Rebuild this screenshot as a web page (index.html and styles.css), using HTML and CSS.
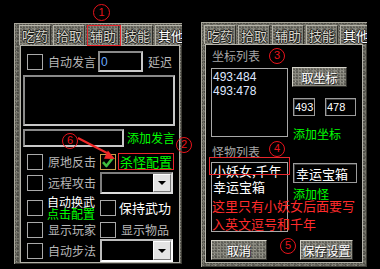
FILE: index.html
```html
<!DOCTYPE html>
<html lang="zh-CN">
<head>
<meta charset="utf-8">
<title>辅助设置</title>
<link rel="stylesheet" href="styles.css">
</head>
<body>
<div class="screen">
  <section class="panel panel-left">
    <div class="tabs">
      <span class="tab">吃药</span><span class="tab">拾取</span><span class="tab">辅助</span><span class="tab">技能</span><span class="tab active">其他</span>
    </div>
    <div class="content content-left">
      <div class="row r1">
        <span class="cb"></span><span class="lbl">自动发言</span><span class="field f-delay">0</span><span class="lbl l-after">延迟</span>
      </div>
      <div class="field memo"></div>
      <div class="row r-say">
        <span class="field f-say"></span><span class="link">添加发言</span>
      </div>
      <div class="row r2">
        <span class="cb"></span><span class="lbl">原地反击</span><span class="cb checked"><svg width="14" height="14" viewBox="0 0 14 14"><path d="M2 7.2 L5.4 11 L12.2 2.4" fill="none" stroke="#3fbf3f" stroke-width="2.6" stroke-linejoin="round"/></svg></span><span class="link link-kill">杀怪配置</span>
      </div>
      <div class="row r3">
        <span class="cb"></span><span class="lbl">远程攻击</span><span class="select"><span class="arrow"></span></span>
      </div>
      <div class="row r4">
        <span class="cb"></span><span class="stack"><span class="white">自动换武</span><span class="link">点击配置</span></span><span class="cb"></span><span class="lbl white big">保持武功</span>
      </div>
      <div class="row r5">
        <span class="cb"></span><span class="lbl">显示玩家</span><span class="cb cb-2"></span><span class="lbl">显示物品</span>
      </div>
      <div class="row r6">
        <span class="cb"></span><span class="lbl">自动步法</span><span class="select select-light"><span class="arrow"></span></span>
      </div>
    </div>
  </section>

  <section class="panel panel-right">
    <div class="tabs">
      <span class="tab">吃药</span><span class="tab">拾取</span><span class="tab">辅助</span><span class="tab">技能</span><span class="tab active">其他</span>
    </div>
    <div class="content content-right">
      <div class="heading">坐标列表</div>
      <div class="pair pair-1">
        <div class="list list-coords"><div class="item num">493:484</div><div class="item num">493:478</div></div>
        <div class="side side-1">
          <span class="btn btn-get">取坐标</span>
          <div class="coords"><span class="field fr f-x">493</span><span class="field fr f-y">478</span></div>
          <span class="link side-link">添加坐标</span>
        </div>
      </div>
      <div class="heading h2">怪物列表</div>
      <div class="pair pair-2">
        <div class="list list-mobs"><div class="item">小妖女,千年</div><div class="item">幸运宝箱</div></div>
        <div class="side side-2">
          <span class="field fr f-mob">幸运宝箱</span>
          <span class="link side-link2">添加怪</span>
        </div>
      </div>
      <div class="actions"><span class="btn btn-cancel">取消</span><span class="btn btn-save">保存设置</span></div>
    </div>
  </section>
</div>

<div class="redbox rb-tab"></div>
<div class="redbox rb-kill"></div>
<div class="redbox rb-mob"></div>

<span class="mark m1">1</span>
<span class="mark m2">2</span>
<span class="mark m3">3</span>
<span class="mark m4">4</span>
<span class="mark m5">5</span>
<span class="mark m6">6</span>

<svg class="arrow-note" width="60" height="35" viewBox="0 0 60 35">
  <line x1="18" y1="8" x2="47" y2="23" stroke="#f02828" stroke-width="2"/>
  <polygon points="55,29 44,28.8 47.9,20.6" fill="#f02828"/>
</svg>

<div class="note"><span>这里只有小妖女后面要写</span><span>入英文逗号和千年</span></div>
</body>
</html>
```

FILE: styles.css
```css
body {
  margin: 0;
  width: 380px;
  height: 269px;
  overflow: hidden;
  position: relative;
  background: #000;
  font-family: "Noto Sans CJK SC", "Liberation Sans", sans-serif;
}

.screen {
  display: flex;
  align-items: flex-start;
  gap: 19px;
  padding: 22px 0 0 14px;
}

/* stone texture */
.panel,
.tab,
.btn {
  background-color: #76756b;
  background-image:
    radial-gradient(circle at 30% 40%, rgba(0,0,0,.32) 0 0.7px, transparent 1.1px),
    radial-gradient(circle at 70% 70%, rgba(255,255,255,.20) 0 0.6px, transparent 1px),
    radial-gradient(circle at 50% 50%, rgba(0,0,0,.22) 0 1px, transparent 1.6px);
  background-size: 3px 3px, 4px 5px, 7px 6px;
}

.panel {
  box-sizing: border-box;
  display: flex;
  flex-direction: column;
  overflow: hidden;
  box-shadow: inset 1px 1px 0 #a9a79c, inset -1px -1px 0 #3c3b35;
}

.panel-left {
  width: 168px;
  height: 241px;
  margin-top: 1px;
  padding: 2px 2px 1px 6px;
}

.panel-right {
  width: 166px;
  height: 245px;
  padding: 3px 4px 4px 4px;
}

.tabs {
  display: flex;
  flex: none;
  height: 20px;
  margin-left: -1px;
  overflow: visible;
}
.panel-right .tabs { height: 19px; }

.tab {
  flex: none;
  box-sizing: border-box;
  height: 100%;
  padding: 0 2px;
  margin-right: 2px;
  border: 1px solid;
  border-color: #b6b4a9 #2f2e29 transparent #b6b4a9;
  border-bottom: 0;
  background-color: #85847a;
  font-size: 13px;
  line-height: 20px;
  color: #d6d5cc;
  white-space: nowrap;
  text-shadow: 1px 0 0 #1d1d1a, -1px 0 0 #1d1d1a, 0 1px 0 #1d1d1a, 0 -1px 0 #1d1d1a;
}
.tab.active { color: #fff; }

.content {
  flex: 1;
  min-height: 0;
  background: #000;
  border: 1px solid #b5b4ab;
  overflow: hidden;
}

.content-left { padding: 5px 2px 0 2px; }
.content-right { padding: 4px 5px 0 5px; }

/* left side */
.row {
  display: flex;
  align-items: center;
  padding-left: 4px;
}
.r1 { height: 21px; }
.r-say { height: 18px; margin-top: 3px; padding-left: 0; }
.r2 { height: 17px; margin-top: 6px; }
.r3 { height: 22px; margin-top: 2px; }
.r4 { height: 24px; margin-top: 2px; }
.r5 { height: 16px; margin-top: 2px; }
.r6 { height: 23px; margin-top: 1px; }

.cb {
  flex: none;
  box-sizing: border-box;
  width: 16px;
  height: 16px;
  border: 1px solid #a9a9a9;
  background: #000;
}
.cb.checked {
  margin-left: 4px;
  border-color: #c9a04a;
  display: flex;
  align-items: center;
  justify-content: center;
}
.cb-2 { margin-left: 4px; }

.lbl {
  flex: none;
  margin-left: 5px;
  font-size: 12px;
  line-height: 14px;
  color: #b7b7b7;
  white-space: nowrap;
}
.r1 .lbl, .r2 .lbl, .r3 .lbl, .r5 .lbl, .r6 .lbl { width: 48px; }
.lbl.l-after { margin-left: 5px; }
.lbl.white { color: #fff; }
.lbl.big { font-size: 13px; line-height: 16px; margin-left: 3px; }
.r5 .cb-2 + .lbl { margin-left: 5px; }

.white { color: #fff; }

.link {
  flex: none;
  font-size: 12px;
  line-height: 14px;
  color: #00ff00;
  white-space: nowrap;
}
.r-say .link { margin-left: 3px; }
.link-kill {
  margin-left: 2px;
  padding: 0 2px;
  font-size: 13px;
  line-height: 16px;
}

.field {
  flex: none;
  box-sizing: border-box;
  display: flex;
  align-items: center;
  background: #000;
  border: 2px solid;
  border-color: #8a8a8a #c8c8c8 #c8c8c8 #8a8a8a;
  font-family: "Liberation Sans", sans-serif;
  font-size: 12px;
  color: #fff;
}
.f-delay {
  width: 45px;
  height: 21px;
  margin-left: 2px;
  padding-left: 1px;
  color: #69aaff;
}
.memo {
  width: 152px;
  height: 51px;
  margin-top: 3px;
}
.f-say {
  width: 101px;
  height: 18px;
}

.stack {
  flex: none;
  width: 53px;
  margin-left: 4px;
  display: flex;
  flex-direction: column;
  font-size: 12px;
  line-height: 12px;
}
.stack .link { line-height: 12px; }

.select {
  flex: none;
  box-sizing: border-box;
  display: flex;
  justify-content: flex-end;
  width: 73px;
  height: 100%;
  margin-left: 4px;
  background: #000;
  border: 2px solid;
  border-color: #7e7e7e #dcdcdc #dcdcdc #7e7e7e;
}
.select-light { border-color: #bdbdbd #fff #fff #bdbdbd; }
.arrow {
  box-sizing: border-box;
  width: 18px;
  display: flex;
  align-items: center;
  justify-content: center;
  background: #e4e4e4;
  border: 1px solid;
  border-color: #fff #777 #777 #fff;
}
.arrow::after {
  content: "";
  border-left: 4px solid transparent;
  border-right: 4px solid transparent;
  border-top: 4px solid #000;
}

/* right side */
.heading {
  font-size: 12px;
  line-height: 14px;
  color: #a6a6a6;
  padding-left: 1px;
}
.h2 { margin-top: 4px; }

.pair {
  display: flex;
  align-items: flex-start;
  gap: 4px;
}
.pair-1 { margin-top: 5px; }
.pair-2 { margin-top: 3px; }

.list {
  flex: none;
  box-sizing: border-box;
  width: 77px;
  border: 1px solid #a9a9a9;
}
.list-coords { height: 69px; padding: 1px 0 0 1px; }
.list-mobs { height: 70px; padding-left: 1px; }

.item {
  font-size: 13px;
  line-height: 16px;
  color: #fff;
  white-space: nowrap;
}
.item.num {
  font-family: "Liberation Sans", sans-serif;
  font-size: 12px;
  line-height: 14px;
  color: #dfe7ff;
}

.side {
  display: flex;
  flex-direction: column;
  align-items: flex-start;
}
.side-1 { margin-top: -1px; }

.btn {
  box-sizing: border-box;
  display: flex;
  align-items: center;
  justify-content: center;
  height: 20px;
  border: 1px solid;
  border-color: #d4d2c8 #2e2d29 #2e2d29 #d4d2c8;
  background-color: #8a897f;
  color: #fff;
  font-size: 12px;
  text-shadow: 1px 1px 0 #222;
}
.btn-get { width: 55px; }

.coords {
  display: flex;
  gap: 10px;
  margin-top: 11px;
  margin-left: 1px;
}
.fr {
  border-width: 1px;
  border-color: #9c9c9c;
  box-shadow: inset 1px 1px 0 #3a3a3a;
  padding-left: 1px;
  font-size: 11px;
}
.f-x { width: 22px; height: 18px; }
.f-y { width: 31px; height: 18px; }
.side-link { margin-top: 11px; margin-left: 1px; }

.f-mob {
  width: 64px;
  height: 20px;
  margin-top: 1px;
  margin-left: 1px;
  padding-left: 2px;
  font-family: "Noto Sans CJK SC", sans-serif;
  font-size: 13px;
}
.side-link2 { margin-top: 4px; margin-left: 1px; line-height: 13px; }

.actions {
  display: flex;
  margin-top: 8px;
}
.btn-cancel { width: 56px; }
.btn-save { width: 53px; margin-left: 33px; }

/* annotations */
.redbox {
  position: absolute;
  box-sizing: border-box;
  border: 1px solid #e8262c;
}
.rb-tab { left: 87px; top: 25px; width: 34px; height: 21px; }
.rb-kill { left: 118px; top: 153px; width: 56px; height: 17px; }
.rb-mob { left: 209px; top: 157px; width: 81px; height: 18px; }

.mark {
  position: absolute;
  box-sizing: border-box;
  width: 16px;
  height: 16px;
  border: 1.5px solid #e8141c;
  border-radius: 50%;
  color: #e8141c;
  font-family: "Liberation Sans", sans-serif;
  font-size: 11px;
  line-height: 13px;
  text-align: center;
}
.m1 { left: 93px; top: 4px; width: 17px; height: 17px; line-height: 14px; }
.m2 { left: 176px; top: 137px; }
.m3 { left: 269px; top: 48px; }
.m4 { left: 269px; top: 141px; }
.m5 { left: 280px; top: 238px; }
.m6 { left: 62px; top: 133px; }

.arrow-note {
  position: absolute;
  left: 60px;
  top: 130px;
}

.note {
  position: absolute;
  left: 212px;
  top: 197px;
  display: flex;
  flex-direction: column;
  color: #ff2b2b;
  font-size: 13px;
  line-height: 18px;
  white-space: nowrap;
}
```
